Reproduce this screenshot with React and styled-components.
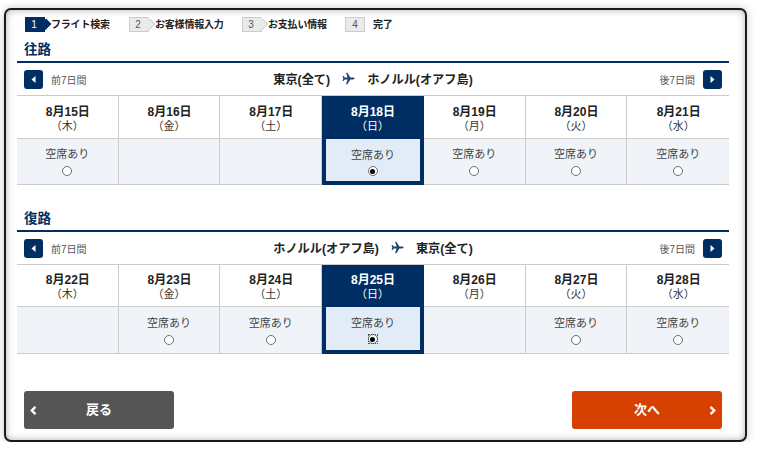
import styled, { createGlobalStyle } from "styled-components";

const NAVY = "#002e62";
const FONT = '"Liberation Sans", "Noto Sans CJK JP", sans-serif';

const GlobalStyle = createGlobalStyle`
  html, body {
    margin: 0;
    padding: 0;
    background: #fff;
    font-family: ${FONT};
    color: #333;
  }
`;

const Frame = styled.div`
  box-sizing: border-box;
  width: 743px;
  height: 434px;
  margin: 8px 0 0 4px;
  padding: 0 16px 0 11px;
  border: 2px solid #1a1a1a;
  border-radius: 7px;
  background: #fff;
  box-shadow: 0 0 8px rgba(0, 0, 0, 0.22), inset 0 0 7px rgba(0, 0, 0, 0.32);
`;

const Steps = styled.ol`
  display: flex;
  align-items: center;
  height: 28px;
  margin: 0 0 0 8px;
  padding: 0;
  list-style: none;
`;

const Step = styled.li`
  display: flex;
  align-items: center;
  width: ${(p) => p.$width}px;
  padding-bottom: 2px;
  font-size: 10px;
  font-weight: 700;
  letter-spacing: -0.2px;
  color: #222;
`;

const StepNum = styled.span`
  box-sizing: border-box;
  position: relative;
  display: flex;
  align-items: center;
  justify-content: center;
  width: 20px;
  height: 15px;
  margin: 2px ${(p) => (p.$last ? 8 : 6)}px 0 0;
  padding-right: ${(p) => (p.$last ? 0 : 3)}px;
  font-size: 10px;
  font-weight: 400;
  color: ${(p) => (p.$active ? "#fff" : "#555")};
  background: ${(p) => (p.$active ? NAVY : "#eaeaea")};
  border: 1px solid ${(p) => (p.$active ? NAVY : "#ccc")};
  border-right-width: ${(p) => (p.$last ? 1 : 0)}px;

  ${(p) =>
    !p.$last &&
    `
    &::after {
      content: "";
      position: absolute;
      top: 2px;
      right: -5px;
      width: 9px;
      height: 9px;
      transform: rotate(45deg) scale(0.72, 1.02);
      background: ${p.$active ? NAVY : "#eaeaea"};
      border-top: 1px solid ${p.$active ? NAVY : "#ccc"};
      border-right: 1px solid ${p.$active ? NAVY : "#ccc"};
    }
  `}
`;

const Section = styled.section`
  margin-bottom: ${(p) => p.$gap}px;
`;

const SectionTitle = styled.h2`
  height: 23px;
  margin: 0;
  padding-left: 7px;
  border-bottom: 2px solid ${NAVY};
  font-size: 13.5px;
  line-height: 24px;
  font-weight: 700;
  color: ${NAVY};
`;

const NavRow = styled.div`
  display: flex;
  align-items: center;
  justify-content: space-between;
  height: 32px;
  padding: 0 7px;
`;

const NavSide = styled.div`
  display: flex;
  align-items: center;
  gap: 8px;
  width: 120px;
  justify-content: ${(p) => (p.$right ? "flex-end" : "flex-start")};
  font-size: 10px;
  color: #555;
`;

const NavButton = styled.button`
  display: flex;
  align-items: center;
  justify-content: center;
  width: 19px;
  height: 19px;
  padding: 0;
  border: 0;
  border-radius: 3px;
  background: ${NAVY};
`;

const Route = styled.div`
  display: flex;
  align-items: center;
  gap: 12px;
  padding-bottom: 1px;
  font-size: 12.2px;
  font-weight: 700;
  color: #222;
`;

const Table = styled.div`
  display: grid;
  grid-template-columns: repeat(7, 1fr);
  width: 712px;
  border-top: 1px solid #ccc;
`;

const DateCell = styled.div`
  box-sizing: border-box;
  height: ${(p) => p.$height}px;
  padding-top: ${(p) => p.$height - 34}px;
  text-align: center;
  font-size: 11px;
  line-height: 14px;
  color: ${(p) => (p.$selected ? "#fff" : "#333")};
  background: ${(p) => (p.$selected ? NAVY : "#fff")};
  border-bottom: 1px solid ${(p) => (p.$selected ? NAVY : "#ccc")};
  border-right: ${(p) => (p.$last ? "0" : `1px solid ${p.$selected ? NAVY : "#ccc"}`)};

  strong {
    display: block;
    padding-left: 1px;
    font-size: 12px;
    font-weight: 700;
    color: ${(p) => (p.$selected ? "#fff" : "#222")};
  }
`;

const SeatCell = styled.div`
  box-sizing: border-box;
  height: ${(p) => p.$height}px;
  padding-top: ${(p) => (p.$selected ? 9 : p.$height - 38)}px;
  text-align: center;
  font-size: 11px;
  line-height: 15px;
  color: #444;
  background: ${(p) => (p.$selected ? "#e2ecf6" : "#f0f4f9")};
  border-bottom: ${(p) => (p.$selected ? `4px solid ${NAVY}` : "1px solid #ccc")};
  border-right: ${(p) =>
    p.$selected ? `4px solid ${NAVY}` : p.$last ? "0" : "1px solid #ccc"};
  border-left: ${(p) => (p.$selected ? `4px solid ${NAVY}` : "0")};
`;

const Radio = styled.span`
  box-sizing: border-box;
  position: relative;
  display: flex;
  align-items: center;
  justify-content: center;
  width: 10px;
  height: 10px;
  margin: ${(p) => (p.$selected ? 3 : 4)}px auto 0;
  border: 1px solid #6f6f6f;
  border-radius: 50%;
  background: #fff;

  &::before {
    content: "";
    display: ${(p) => (p.$focus ? "block" : "none")};
    position: absolute;
    inset: -1px;
    border: 1px dotted #555;
  }

  &::after {
    content: "";
    display: ${(p) => (p.$selected ? "block" : "none")};
    width: 5px;
    height: 5px;
    border-radius: 50%;
    background: #000;
  }
`;

const Footer = styled.div`
  display: flex;
  justify-content: space-between;
  padding: 0 7px;
`;

const ActionButton = styled.button`
  position: relative;
  width: 150px;
  height: 38px;
  padding: 0 0 4px;
  border: 0;
  border-radius: 3px;
  background: ${(p) => p.$bg};
  color: #fff;
  font-family: ${FONT};
  font-size: 13px;
  font-weight: 700;
`;

const Chevron = styled.svg`
  position: absolute;
  top: 15px;
  ${(p) => (p.$right ? "right: 6px;" : "left: 6px;")}
`;

const Triangle = ({ right }) => (
  <svg width="5" height="7" viewBox="0 0 5 7">
    <path d={right ? "M0.5 0 L4.5 3.5 L0.5 7 Z" : "M4.5 0 L0.5 3.5 L4.5 7 Z"} fill="#fff" />
  </svg>
);

const Plane = () => (
  <svg width="13" height="13" viewBox="0 0 14 14">
    <path
      d="M13.5 7 C13.5 6.3 12.6 6 11.8 6 L9 6 L5.8 0.8 L4.4 0.8 L6 6 L3 6 L1.6 4.2 L0.6 4.2 L1.4 7 L0.6 9.8 L1.6 9.8 L3 8 L6 8 L4.4 13.2 L5.8 13.2 L9 8 L11.8 8 C12.6 8 13.5 7.7 13.5 7 Z"
      fill="#1c4674"
    />
  </svg>
);

const steps = [
  { n: 1, label: "フライト検索", width: 104, active: true },
  { n: 2, label: "お客様情報入力", width: 113 },
  { n: 3, label: "お支払い情報", width: 103 },
  { n: 4, label: "完了", width: 60, last: true },
];

const outbound = [
  ["8月15日", "（木）", true],
  ["8月16日", "（金）", false],
  ["8月17日", "（土）", false],
  ["8月18日", "（日）", true, "selected"],
  ["8月19日", "（月）", true],
  ["8月20日", "（火）", true],
  ["8月21日", "（水）", true],
];

const inbound = [
  ["8月22日", "（木）", false],
  ["8月23日", "（金）", true],
  ["8月24日", "（土）", true],
  ["8月25日", "（日）", true, "focus"],
  ["8月26日", "（月）", false],
  ["8月27日", "（火）", true],
  ["8月28日", "（水）", true],
];

const Flight = ({ title, from, to, days, gap, dateHeight, seatHeight }) => (
  <Section $gap={gap}>
    <SectionTitle>{title}</SectionTitle>
    <NavRow>
      <NavSide>
        <NavButton>
          <Triangle />
        </NavButton>
        前7日間
      </NavSide>
      <Route>
        <span>{from}</span>
        <Plane />
        <span>{to}</span>
      </Route>
      <NavSide $right>
        後7日間
        <NavButton>
          <Triangle right />
        </NavButton>
      </NavSide>
    </NavRow>
    <Table>
      {days.map(([date, week, , state], i) => (
        <DateCell key={date} $height={dateHeight} $selected={!!state} $last={i === 6}>
          <strong>{date}</strong>
          {week}
        </DateCell>
      ))}
      {days.map(([date, , open, state], i) => (
        <SeatCell key={date} $height={seatHeight} $selected={!!state} $last={i === 6}>
          {open && (
            <>
              空席あり
              <Radio $selected={!!state} $focus={state === "focus"} />
            </>
          )}
        </SeatCell>
      ))}
    </Table>
  </Section>
);

const App = () => (
  <>
    <GlobalStyle />
    <Frame>
      <Steps>
        {steps.map((s) => (
          <Step key={s.n} $width={s.width}>
            <StepNum $active={s.active} $last={s.last}>
              {s.n}
            </StepNum>
            {s.label}
          </Step>
        ))}
      </Steps>
      <Flight
        title="往路"
        from="東京(全て)"
        to="ホノルル(オアフ島)"
        days={outbound}
        gap={22}
        dateHeight={43}
        seatHeight={46}
      />
      <Flight
        title="復路"
        from="ホノルル(オアフ島)"
        to="東京(全て)"
        days={inbound}
        gap={37}
        dateHeight={42}
        seatHeight={47}
      />
      <Footer>
        <ActionButton $bg="#555555">
          <Chevron width="7" height="9" viewBox="0 0 7 9">
            <path d="M5.5 0.8 L1.8 4.5 L5.5 8.2" fill="none" stroke="#fff" strokeWidth="2.4" />
          </Chevron>
          戻る
        </ActionButton>
        <ActionButton $bg="#d64000">
          次へ
          <Chevron $right width="7" height="9" viewBox="0 0 7 9">
            <path d="M1.5 0.8 L5.2 4.5 L1.5 8.2" fill="none" stroke="#fff" strokeWidth="2.4" />
          </Chevron>
        </ActionButton>
      </Footer>
    </Frame>
  </>
);

export default App;
